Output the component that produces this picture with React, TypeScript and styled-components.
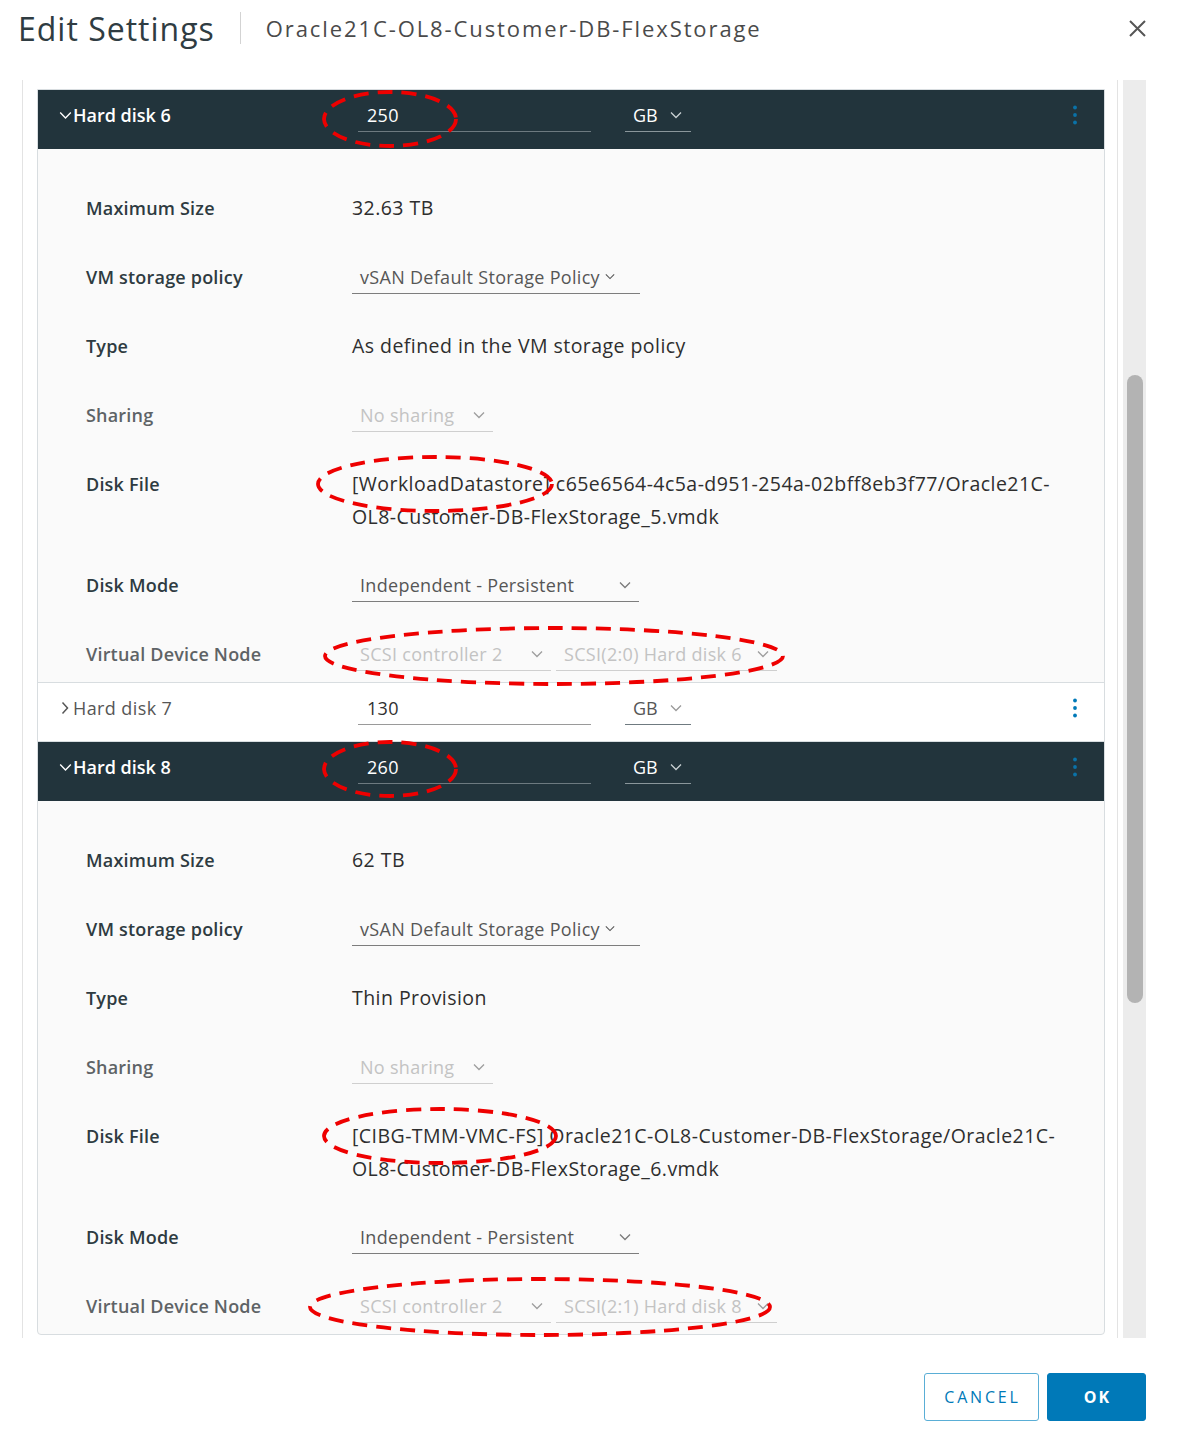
import React from "react";
import styled, { createGlobalStyle } from "styled-components";

const GlobalStyle = createGlobalStyle`
  html, body { margin: 0; padding: 0; background: #fff; }
  body { font-family: "Open Sans", "Noto Sans", sans-serif; }
  * { box-sizing: border-box; }
`;

const Page = styled.div`
  position: relative;
  width: 1180px;
  height: 1440px;
  background: #fff;
  overflow: hidden;
`;

const TitleBar = styled.header`
  display: flex;
  align-items: center;
  height: 56px;
  padding: 0 34px 0 18px;
`;

const Title = styled.h1`
  margin: 0;
  font-size: 32px;
  font-weight: 400;
  letter-spacing: 1px;
  color: #2f3c42;
  white-space: nowrap;
`;

const TitleDivider = styled.span`
  width: 1px;
  height: 32px;
  background: #d3d3d3;
  margin: 0 25px 0 25px;
`;

const Subtitle = styled.span`
  font-size: 22px;
  letter-spacing: 1.9px;
  color: #4a4a4a;
  white-space: nowrap;
`;

const CloseButton = styled.button`
  margin-left: auto;
  border: 0;
  background: none;
  padding: 0;
  width: 18px;
  height: 18px;
  display: flex;
  align-items: center;
  justify-content: center;
`;

const Viewport = styled.div`
  display: flex;
  margin: 24px 0 0 22px;
  width: 1124px;
  height: 1258px;
`;

const ScrollArea = styled.div`
  width: 1096px;
  height: 100%;
  border-left: 1px solid #e3e3e3;
  border-right: 1px solid #e3e3e3;
  padding: 9px 12px 0 14px;
  overflow: hidden;
`;

const ScrollTrack = styled.div`
  width: 23px;
  margin-left: 5px;
  height: 100%;
  background: #ececec;
  padding-top: 295px;
`;

const ScrollThumb = styled.div`
  width: 16px;
  margin-left: 4px;
  height: 628px;
  border-radius: 8px;
  background: #b3b3b3;
`;

const Card = styled.div`
  border: 1px solid #d8dde0;
  border-radius: 0 0 4px 4px;
  background: #fafafa;
  overflow: hidden;
`;

const DiskHeader = styled.div<{ $dark: boolean }>`
  display: flex;
  align-items: flex-start;
  height: 59px;
  padding: 8px 26px 0 19px;
  background: ${(p) => (p.$dark ? "#22343c" : "#ffffff")};
  border-bottom: ${(p) => (p.$dark ? "none" : "1px solid #d8dde0")};
`;

const DiskName = styled.div<{ $dark: boolean }>`
  display: flex;
  align-items: center;
  width: 301px;
  height: 34px;
  font-size: 18px;
  font-weight: ${(p) => (p.$dark ? 600 : 400)};
  letter-spacing: ${(p) => (p.$dark ? 0 : 0.4)}px;
  color: ${(p) => (p.$dark ? "#ffffff" : "#565656")};
  white-space: nowrap;
`;

const Caret = styled.span`
  display: inline-flex;
  width: 16px;
  justify-content: center;
  align-items: center;
`;

const SizeInput = styled.input<{ $dark: boolean }>`
  width: 233px;
  height: 34px;
  padding: 0 0 0 9px;
  margin: 0;
  border: 0;
  border-bottom: 1px solid ${(p) => (p.$dark ? "#6d7a80" : "#9a9a9a")};
  background: transparent;
  outline: none;
  font-family: inherit;
  font-size: 18px;
  letter-spacing: 0.3px;
  color: ${(p) => (p.$dark ? "#ffffff" : "#313131")};
`;

const UnitSelect = styled.div<{ $dark: boolean }>`
  display: flex;
  align-items: center;
  justify-content: space-between;
  width: 66px;
  height: 34px;
  margin-left: 34px;
  padding: 0 9px 0 8px;
  font-size: 18px;
  color: ${(p) => (p.$dark ? "#ffffff" : "#565656")};
  border-bottom: 1px solid ${(p) => (p.$dark ? "#8a969b" : "#6f7a80")};
`;

const Kebab = styled.span`
  margin-left: auto;
  display: flex;
  align-items: center;
  height: 34px;
`;

const DiskBody = styled.div<{ $last?: boolean }>`
  display: flex;
  flex-direction: column;
  gap: 35px;
  padding: 42px 0 11px 48px;
  border-bottom: ${(p) => (p.$last ? "none" : "1px solid #d8dde0")};
`;

const FieldRow = styled.div`
  display: grid;
  grid-template-columns: 266px 1fr;
  align-items: start;
`;

const FieldLabel = styled.div<{ $muted?: boolean }>`
  font-size: 18px;
  line-height: 34px;
  font-weight: 600;
  letter-spacing: 0.2px;
  color: ${(p) => (p.$muted ? "#5e6366" : "#2e3b41")};
  white-space: nowrap;
`;

const FieldValue = styled.div`
  display: flex;
  gap: 5px;
  font-size: 19.5px;
  letter-spacing: 0.45px;
  line-height: 34px;
  color: #2e2e2e;
  white-space: nowrap;
`;

const FileValue = styled.div`
  font-size: 19.5px;
  letter-spacing: 0.45px;
  line-height: 33px;
  color: #2e2e2e;
  white-space: nowrap;
`;

const Select = styled.div<{ $width: number; $disabled?: boolean; $inline?: boolean }>`
  display: flex;
  align-items: center;
  justify-content: ${(p) => (p.$inline ? "flex-start" : "space-between")};
  gap: 5px;
  width: ${(p) => p.$width}px;
  height: 34px;
  padding: 0 8px 0 8px;
  font-size: 18px;
  letter-spacing: 0.3px;
  white-space: nowrap;
  color: ${(p) => (p.$disabled ? "#c3c3c3" : "#565656")};
  border-bottom: 1px solid ${(p) => (p.$disabled ? "#cfcfcf" : "#7d7d7d")};
`;

const Footer = styled.footer`
  display: flex;
  justify-content: flex-end;
  gap: 8px;
  margin-top: 35px;
  padding-right: 34px;
`;

const Button = styled.button<{ $primary?: boolean }>`
  height: 48px;
  width: ${(p) => (p.$primary ? 99 : 115)}px;
  border-radius: 3px;
  border: 1px solid ${(p) => (p.$primary ? "#0079b8" : "#5aaed6")};
  background: ${(p) => (p.$primary ? "#0079b8" : "#ffffff")};
  color: ${(p) => (p.$primary ? "#ffffff" : "#0079b8")};
  font-family: inherit;
  font-size: 16px;
  font-weight: ${(p) => (p.$primary ? 700 : 500)};
  letter-spacing: ${(p) => (p.$primary ? 2 : 2.8)}px;
  padding: 0 0 0 2px;
`;

const Overlay = styled.svg`
  position: absolute;
  left: 0;
  top: 0;
  pointer-events: none;
`;

const ChevronDown = ({ color, w = 12 }: { color: string; w?: number }) => (
  <svg width={w} height={w / 2 + 2} viewBox="0 0 12 8">
    <polyline points="1,1.5 6,6.5 11,1.5" fill="none" stroke={color} strokeWidth="1.3" />
  </svg>
);

const ChevronRight = ({ color }: { color: string }) => (
  <svg width="8" height="14" viewBox="0 0 8 14">
    <polyline points="1.5,1.5 6.5,7 1.5,12.5" fill="none" stroke={color} strokeWidth="1.5" />
  </svg>
);

const KebabIcon = ({ color }: { color: string }) => (
  <svg width="6" height="20" viewBox="0 0 6 20">
    <circle cx="3" cy="2.5" r="1.9" fill={color} />
    <circle cx="3" cy="10" r="1.9" fill={color} />
    <circle cx="3" cy="17.5" r="1.9" fill={color} />
  </svg>
);

type DiskProps = {
  name: string;
  size: string;
  expanded: boolean;
};

const DiskRow = ({ name, size, expanded }: DiskProps) => (
  <DiskHeader $dark={expanded}>
    <DiskName $dark={expanded}>
      <Caret>
        {expanded ? <ChevronDown color="#ffffff" w={13} /> : <ChevronRight color="#565656" />}
      </Caret>
      {name}
    </DiskName>
    <SizeInput $dark={expanded} value={size} readOnly />
    <UnitSelect $dark={expanded}>
      GB <ChevronDown color={expanded ? "#c9d0d3" : "#9a9a9a"} />
    </UnitSelect>
    <Kebab>
      <KebabIcon color={expanded ? "#0a72a8" : "#0079b8"} />
    </Kebab>
  </DiskHeader>
);

type DetailProps = {
  max: string;
  type: string;
  fileLine1: string;
  fileLine2: string;
  node: string;
  last?: boolean;
};

const DiskDetails = ({ max, type, fileLine1, fileLine2, node, last }: DetailProps) => (
  <DiskBody $last={last}>
    <FieldRow>
      <FieldLabel>Maximum Size</FieldLabel>
      <FieldValue>{max}</FieldValue>
    </FieldRow>
    <FieldRow>
      <FieldLabel>VM storage policy</FieldLabel>
      <FieldValue>
        <Select $width={288} $inline>
          vSAN Default Storage Policy <ChevronDown color="#565656" w={10} />
        </Select>
      </FieldValue>
    </FieldRow>
    <FieldRow>
      <FieldLabel>Type</FieldLabel>
      <FieldValue>{type}</FieldValue>
    </FieldRow>
    <FieldRow>
      <FieldLabel $muted>Sharing</FieldLabel>
      <FieldValue>
        <Select $width={141} $disabled>
          No sharing <ChevronDown color="#9d9d9d" />
        </Select>
      </FieldValue>
    </FieldRow>
    <FieldRow>
      <FieldLabel>Disk File</FieldLabel>
      <FileValue>
        {fileLine1}
        <br />
        {fileLine2}
      </FileValue>
    </FieldRow>
    <FieldRow>
      <FieldLabel>Disk Mode</FieldLabel>
      <FieldValue>
        <Select $width={287}>
          Independent - Persistent <ChevronDown color="#7a7a7a" />
        </Select>
      </FieldValue>
    </FieldRow>
    <FieldRow>
      <FieldLabel $muted>Virtual Device Node</FieldLabel>
      <FieldValue>
        <Select $width={199} $disabled>
          SCSI controller 2 <ChevronDown color="#9d9d9d" />
        </Select>
        <Select $width={221} $disabled>
          {node} <ChevronDown color="#9d9d9d" />
        </Select>
      </FieldValue>
    </FieldRow>
  </DiskBody>
);

const ellipses = [
  { cx: 390, cy: 119, rx: 66, ry: 27 },
  { cx: 435, cy: 484, rx: 117, ry: 27 },
  { cx: 554, cy: 656, rx: 229, ry: 28 },
  { cx: 390, cy: 769, rx: 66, ry: 27 },
  { cx: 440, cy: 1136, rx: 116, ry: 27 },
  { cx: 540, cy: 1307, rx: 230, ry: 28 },
];

export default function App() {
  return (
    <Page>
      <GlobalStyle />
      <TitleBar>
        <Title>Edit Settings</Title>
        <TitleDivider />
        <Subtitle>Oracle21C-OL8-Customer-DB-FlexStorage</Subtitle>
        <CloseButton aria-label="Close">
          <svg width="17" height="17" viewBox="0 0 17 17">
            <path d="M1 1 L16 16 M16 1 L1 16" stroke="#565656" strokeWidth="2" fill="none" />
          </svg>
        </CloseButton>
      </TitleBar>

      <Viewport>
        <ScrollArea>
          <Card>
            <DiskRow name="Hard disk 6" size="250" expanded />
            <DiskDetails
              max="32.63 TB"
              type="As defined in the VM storage policy"
              fileLine1="[WorkloadDatastore] c65e6564-4c5a-d951-254a-02bff8eb3f77/Oracle21C-"
              fileLine2="OL8-Customer-DB-FlexStorage_5.vmdk"
              node="SCSI(2:0) Hard disk 6"
            />
            <DiskRow name="Hard disk 7" size="130" expanded={false} />
            <DiskRow name="Hard disk 8" size="260" expanded />
            <DiskDetails
              max="62 TB"
              type="Thin Provision"
              fileLine1="[CIBG-TMM-VMC-FS] Oracle21C-OL8-Customer-DB-FlexStorage/Oracle21C-"
              fileLine2="OL8-Customer-DB-FlexStorage_6.vmdk"
              node="SCSI(2:1) Hard disk 8"
              last
            />
          </Card>
        </ScrollArea>
        <ScrollTrack>
          <ScrollThumb />
        </ScrollTrack>
      </Viewport>

      <Footer>
        <Button>CANCEL</Button>
        <Button $primary>OK</Button>
      </Footer>

      <Overlay width="1180" height="1440" viewBox="0 0 1180 1440">
        {ellipses.map((e, i) => (
          <ellipse
            key={i}
            cx={e.cx}
            cy={e.cy}
            rx={e.rx}
            ry={e.ry}
            fill="none"
            stroke="#ee0000"
            strokeWidth="3.8"
            strokeDasharray="15 9"
          />
        ))}
      </Overlay>
    </Page>
  );
}
